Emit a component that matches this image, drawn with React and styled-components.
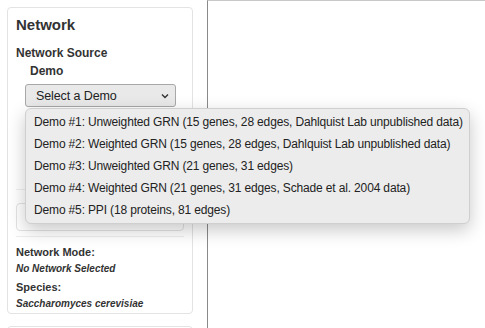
import React from 'react'
import styled, { createGlobalStyle } from 'styled-components'

const GlobalStyle = createGlobalStyle`
  html, body {
    margin: 0;
    padding: 0;
    background: #fff;
    font-family: "Liberation Sans", Arial, sans-serif;
    color: #333;
    overflow: hidden;
  }
`

const Page = styled.div`
  display: flex;
  height: 328px;
  overflow: hidden;
`

const Sidebar = styled.div`
  width: 193px;
  box-sizing: border-box;
  padding: 7px 0 0 7px;
  display: flex;
  flex-direction: column;
  gap: 12px;
  flex-shrink: 0;
`

const Well = styled.div`
  border: 1px solid #e3e3e3;
  border-radius: 4px;
  background: #fff;
  padding: 8px 8px 0 8px;
  height: ${p => p.h}px;
  box-sizing: border-box;
  flex-shrink: 0;
`

const Main = styled.div`
  flex: 1;
  margin-left: 14px;
  border-left: 1px solid #8a8a8a;
  border-top: 1px solid #c8c8c8;
  background: #fff;
`

const Title = styled.h3`
  margin: 0;
  font-size: 15px;
  font-weight: bold;
  color: #333;
  line-height: 18px;
`

const SectionLabel = styled.div`
  margin-top: 12px;
  font-size: 12px;
  font-weight: bold;
  line-height: 14px;
`

const SubLabel = styled.div`
  margin: 4px 0 0 14px;
  font-size: 12px;
  font-weight: bold;
  line-height: 14px;
`

const SelectWrap = styled.div`
  position: relative;
  margin: 6px 0 0 9px;
  width: 151px;
`

const SelectButton = styled.div`
  height: 23px;
  box-sizing: border-box;
  border: 1px solid #a8a8a8;
  border-radius: 3px;
  background: #e9e9e9;
  display: flex;
  align-items: center;
  justify-content: space-between;
  padding: 0 6px 0 10px;
  font-size: 12.5px;
  letter-spacing: -0.1px;
  color: #222;
`

const Chevron = styled.svg`
  width: 8px;
  height: 6px;
`

const Menu = styled.ul`
  position: absolute;
  top: 24px;
  left: 0;
  margin: 0;
  padding: 2px 0;
  list-style: none;
  width: 445px;
  box-sizing: border-box;
  background: #ececec;
  border: 1px solid #cfcfcf;
  border-radius: 6px;
  box-shadow: 0 6px 18px rgba(0, 0, 0, 0.22);
  z-index: 10;
`

const MenuItem = styled.li`
  height: 22px;
  line-height: 22px;
  padding-left: 8px;
  font-size: 12px;
  letter-spacing: -0.15px;
  color: #222;
  white-space: nowrap;
`

const Rule = styled.hr`
  border: 0;
  border-top: 1px solid #eee;
  margin: ${p => p.m};
`

const HiddenBox = styled.div`
  height: 28px;
  box-sizing: border-box;
  border: 1px solid #e3e3e3;
  border-radius: 4px;
`

const InfoLabel = styled.div`
  font-size: 11px;
  font-weight: bold;
  line-height: 13px;
  margin-top: ${p => p.mt}px;
`

const InfoValue = styled.div`
  font-size: 10px;
  font-weight: bold;
  font-style: italic;
  line-height: 12px;
  margin-top: 4px;
`

const demos = [
  'Demo #1: Unweighted GRN (15 genes, 28 edges, Dahlquist Lab unpublished data)',
  'Demo #2: Weighted GRN (15 genes, 28 edges, Dahlquist Lab unpublished data)',
  'Demo #3: Unweighted GRN (21 genes, 31 edges)',
  'Demo #4: Weighted GRN (21 genes, 31 edges, Schade et al. 2004 data)',
  'Demo #5: PPI (18 proteins, 81 edges)',
]

export default function App() {
  return (
    <>
      <GlobalStyle />
      <Page>
        <Sidebar>
          <Well h={307}>
            <Title>Network</Title>
            <SectionLabel>Network Source</SectionLabel>
            <SubLabel>Demo</SubLabel>
            <SelectWrap>
              <SelectButton>
                <span>Select a Demo</span>
                <Chevron viewBox="0 0 8 6">
                  <path d="M1 1.5 L4 4.5 L7 1.5" fill="none" stroke="#333" strokeWidth="1.4" />
                </Chevron>
              </SelectButton>
              <Menu>
                {demos.map(d => (
                  <MenuItem key={d}>{d}</MenuItem>
                ))}
              </Menu>
            </SelectWrap>
            <Rule m="82px 0 13px 0" />
            <HiddenBox />
            <Rule m="5px 0 0 0" />
            <InfoLabel mt={9}>Network Mode:</InfoLabel>
            <InfoValue>No Network Selected</InfoValue>
            <InfoLabel mt={6}>Species:</InfoLabel>
            <InfoValue>Saccharomyces cerevisiae</InfoValue>
          </Well>
          <Well h={40} />
        </Sidebar>
        <Main />
      </Page>
    </>
  )
}
